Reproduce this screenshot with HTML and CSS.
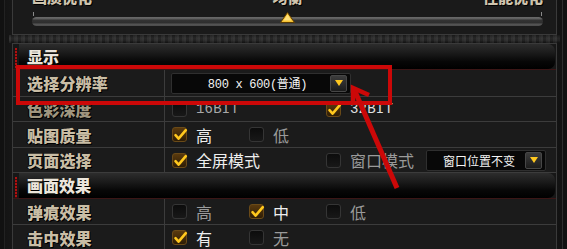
FILE: index.html
```html
<!DOCTYPE html>
<html lang="zh-CN">
<head>
<meta charset="utf-8">
<title>显示设置</title>
<link rel="stylesheet" href="styles.css">
</head>
<body>
<div class="screen">
  <div class="frame">
    <div class="top-panel">
      <div class="scale-labels"><span>画质优化</span><span>均衡</span><span>性能优化</span></div>
      <div class="slider">
        <div class="ticks"><span class="tick"></span><span class="tick"></span></div>
        <div class="track">
          <svg class="thumb" style="left:50%" width="15" height="11" viewBox="0 0 15 11"><polygon points="7.5,0.5 14.5,10.5 0.5,10.5" fill="#f6c233" stroke="#5a3a00" stroke-width="1"/><polygon points="7.5,2.5 11.5,8.5 3.5,8.5" fill="#ffe07a"/></svg>
        </div>
      </div>
    </div>
    <div class="separator"></div>
    <div class="main-panel">
      <div class="section"><span class="accent"></span><div class="section-bar">显示</div></div>

      <div class="row row-tall">
        <div class="label">选择分辨率</div>
        <div class="value">
          <div class="select select-res"><span class="select-text">800 x 600(普通)</span><span class="select-btn"><span class="caret"></span></span></div>
        </div>
      </div>

      <div class="row row-short">
        <div class="label label-dim">色彩深度</div>
        <div class="value">
          <div class="opt"><span class="box"></span><span class="mono">16BIT</span></div>
          <div class="opt"></div>
          <div class="opt"><span class="box box-on"><svg width="16" height="16" viewBox="0 0 16 16"><path d="M3.5 8.2 L6.6 11.6 L13.8 3.2" fill="none" stroke="#ffc81e" stroke-width="2.6" stroke-linecap="round" stroke-linejoin="round"/></svg></span><span class="mono">32BIT</span></div>
        </div>
      </div>

      <div class="row">
        <div class="label">贴图质量</div>
        <div class="value">
          <div class="opt"><span class="box box-on"><svg width="16" height="16" viewBox="0 0 16 16"><path d="M3.5 8.2 L6.6 11.6 L13.8 3.2" fill="none" stroke="#ffc81e" stroke-width="2.6" stroke-linecap="round" stroke-linejoin="round"/></svg></span><span class="txt">高</span></div>
          <div class="opt"><span class="box"></span><span class="txt txt-off">低</span></div>
        </div>
      </div>

      <div class="row row-short">
        <div class="label">页面选择</div>
        <div class="value">
          <div class="opt opt-wide"><span class="box box-on"><svg width="16" height="16" viewBox="0 0 16 16"><path d="M3.5 8.2 L6.6 11.6 L13.8 3.2" fill="none" stroke="#ffc81e" stroke-width="2.6" stroke-linecap="round" stroke-linejoin="round"/></svg></span><span class="txt">全屏模式</span></div>
          <div class="opt opt-auto"><span class="box"></span><span class="txt txt-off">窗口模式</span></div>
          <div class="select select-win"><span class="select-text">窗口位置不变</span><span class="select-btn"><span class="caret"></span></span></div>
        </div>
      </div>

      <div class="section"><span class="accent"></span><div class="section-bar">画面效果</div></div>

      <div class="row">
        <div class="label">弹痕效果</div>
        <div class="value">
          <div class="opt"><span class="box"></span><span class="txt txt-off">高</span></div>
          <div class="opt"><span class="box box-on"><svg width="16" height="16" viewBox="0 0 16 16"><path d="M3.5 8.2 L6.6 11.6 L13.8 3.2" fill="none" stroke="#ffc81e" stroke-width="2.6" stroke-linecap="round" stroke-linejoin="round"/></svg></span><span class="txt">中</span></div>
          <div class="opt"><span class="box"></span><span class="txt txt-off">低</span></div>
        </div>
      </div>

      <div class="row">
        <div class="label">击中效果</div>
        <div class="value">
          <div class="opt"><span class="box box-on"><svg width="16" height="16" viewBox="0 0 16 16"><path d="M3.5 8.2 L6.6 11.6 L13.8 3.2" fill="none" stroke="#ffc81e" stroke-width="2.6" stroke-linecap="round" stroke-linejoin="round"/></svg></span><span class="txt">有</span></div>
          <div class="opt"><span class="box"></span><span class="txt txt-off">无</span></div>
        </div>
      </div>
    </div>
  </div>

  <svg class="annotation" width="567" height="249" viewBox="0 0 567 249">
    <rect x="18" y="67" width="372" height="36" fill="none" stroke="#cc0808" stroke-width="4"/>
    <line x1="397" y1="188" x2="354" y2="89" stroke="#cc0808" stroke-width="5"/>
    <polyline points="353,104 353,88 369,95" fill="none" stroke="#cc0808" stroke-width="4.5" stroke-linejoin="miter"/>
  </svg>
</div>
</body>
</html>
```

FILE: styles.css
```css
* { box-sizing: border-box; margin: 0; padding: 0; }

html, body {
  width: 567px;
  height: 249px;
  overflow: hidden;
  background: #0f0f0f;
}

body {
  font-family: "Noto Sans CJK SC", "Noto Sans", sans-serif;
  color: #e6e6e6;
}

.screen {
  position: relative;
  width: 567px;
  height: 249px;
  overflow: hidden;
  background: #111;
}

.frame {
  margin: 0 4px;
  height: 249px;
  border-left: 1px solid #222;
  border-right: 1px solid #2e2e2e;
  padding: 0 5px 0 7px;
  background: linear-gradient(90deg, #141414, #1a1a1a 3%, #161616 97%, #121212);
}

/* ---------- top slider panel ---------- */
.top-panel {
  height: 35px;
  border: 1px solid #3a3a3a;
  border-top: none;
  background: #1a1a1a;
  padding: 0 13px 0 19px;
  overflow: hidden;
}

.scale-labels {
  display: flex;
  justify-content: space-between;
  margin-top: -11px;
  height: 16px;
  line-height: 16px;
  font-size: 15px;
  font-weight: 900;
  color: #cfc4ae;
  text-shadow: 1px 1px 0 #000;
}

.slider {
  margin-top: 7px;
  height: 14px;
  display: flex;
  flex-direction: column;
}

.ticks {
  display: flex;
  justify-content: space-between;
  height: 5px;
  padding: 0 1px;
}

.tick {
  width: 1px;
  height: 4px;
  background: #8a8a8a;
}

.track {
  position: relative;
  height: 9px;
  border-radius: 5px;
  background: linear-gradient(#6a6a6a 0, #5c5c5c 2px, #333 3px, #2e2e2e 6px, #555 7px, #4a4a4a 9px);
}

.thumb {
  position: absolute;
  top: -5px;
  margin-left: -8px;
}

.separator {
  height: 8px;
  margin: 0 -3px;
  background:
    repeating-linear-gradient(90deg, rgba(255,255,255,0.05) 0 2px, rgba(0,0,0,0.12) 2px 5px, rgba(255,255,255,0.03) 5px 7px),
    linear-gradient(#1c1c1c, #2c2c2c 40%, #262626 70%, #141414);
}

/* ---------- main panel ---------- */
.main-panel {
  border: 1px solid #3a3a3a;
  border-bottom: none;
  background: #171717;
  height: 206px;
}

.section {
  display: flex;
  height: 26px;
  border-bottom: 1px solid #3b1616;
}

.accent {
  width: 2px;
  margin: 4px 0 0 2px;
  background: repeating-linear-gradient(#b01010 0 2px, #4a0808 2px 3px);
}

.section-bar {
  flex: 1;
  margin: 0 1px 0 2px;
  padding-left: 8px;
  border-radius: 0 7px 7px 0;
  background: linear-gradient(#2d2d2d, #1b1b1b 35%, #070707 70%, #000);
  font-size: 16px;
  font-weight: 900;
  line-height: 25px;
  color: #ece6dc;
  text-shadow: 1px 1px 0 #000;
}

.row {
  display: grid;
  grid-template-columns: 152px 1fr;
  height: 26px;
  border-bottom: 1px solid #3c3c3c;
  background: #1b1b1b;
}

.row-tall { height: 27px; }
.row-short { height: 25px; }

.label {
  border-right: 1px solid #3c3c3c;
  padding-left: 14px;
  display: flex;
  align-items: center;
  font-size: 16px;
  font-weight: 900;
  color: #c9bda5;
  text-shadow: 1px 1px 0 #000, -1px 0 0 #000;
  letter-spacing: 0.2px;
}

.label-dim { color: #a0967f; }

.value {
  display: flex;
  align-items: center;
  padding-left: 7px;
}

.opt {
  width: 77px;
  flex: none;
  display: flex;
  align-items: center;
  gap: 9px;
}

.opt-wide { width: 154px; }
.opt-auto { width: auto; }

.box {
  position: relative;
  width: 15px;
  height: 15px;
  flex: none;
  border: 1px solid #353535;
  border-radius: 3px;
  background: linear-gradient(#0c0c0c, #181818);
}

.box-on {
  border-color: #6a4a18;
  background: linear-gradient(#5a3a0e, #2e1d06);
}

.box svg {
  position: absolute;
  left: -1px;
  top: -1px;
  overflow: visible;
}

.txt {
  font-size: 16px;
  line-height: 20px;
  color: #eeeeee;
}

.txt-off { color: #9a9a9a; }

.mono {
  font-family: "Liberation Mono", "DejaVu Sans Mono", monospace;
  font-size: 14px;
  color: #a8a8a8;
  letter-spacing: 0.2px;
}

.opt .box-on + .mono { color: #e0e0e0; }

/* ---------- select boxes ---------- */
.select {
  display: flex;
  align-items: center;
  height: 21px;
  border: 1px solid #2f2f2f;
  border-radius: 2px;
  background: #080808;
}

.select-res {
  width: 180px;
  margin-left: -1px;
  padding-left: 13px;
}

.select-win {
  width: 120px;
  margin-left: 12px;
  padding-left: 6px;
}

.select-text {
  flex: 1;
  text-align: center;
  font-family: "Liberation Mono", "Noto Sans CJK SC", monospace;
  font-size: 12px;
  letter-spacing: -0.3px;
  color: #f4f4f4;
  white-space: nowrap;
}

.select-win .select-text {
  font-family: "Noto Sans CJK SC", sans-serif;
  letter-spacing: 0;
}

.select-btn {
  width: 17px;
  height: 17px;
  margin-right: 3px;
  flex: none;
  display: flex;
  align-items: center;
  justify-content: center;
  border: 1px solid #474747;
  border-radius: 2px;
  background: linear-gradient(#3c3c3c, #1c1c1c);
}

.caret {
  width: 0;
  height: 0;
  border-left: 4px solid transparent;
  border-right: 4px solid transparent;
  border-top: 6px solid #ffc820;
}

/* ---------- annotation overlay ---------- */
.annotation {
  position: absolute;
  left: 0;
  top: 0;
  pointer-events: none;
}
```
